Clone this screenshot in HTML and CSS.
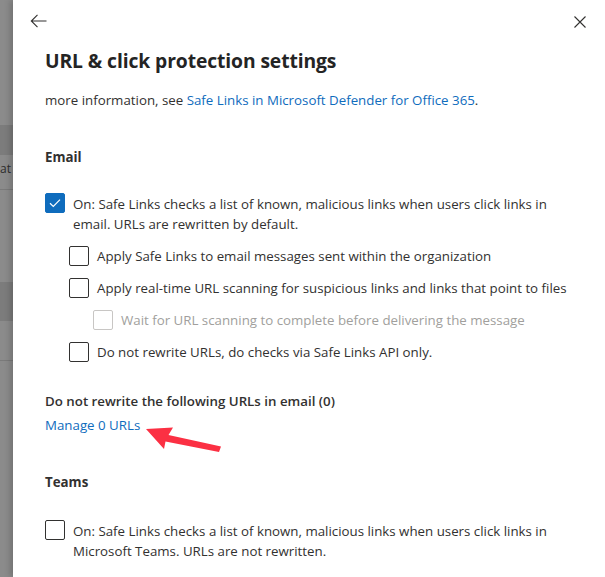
FILE: index.html
```html
<!DOCTYPE html>
<html>
<head>
<meta charset="utf-8">
<link rel="stylesheet" href="styles.css">
</head>
<body>
<div class="page">
  <div class="backdrop">
    <div class="band b1"></div>
    <div class="bd-text">at</div>
    <div class="rule r1"></div>
    <div class="band b2"></div>
    <div class="rule r2"></div>
  </div>
  <div class="panel">
    <div class="topbar">
      <svg class="back" width="17" height="14" viewBox="0 0 17 14"><path d="M7.5 0.8 L1.3 7 L7.5 13.2 M1.3 7 H16.5" fill="none" stroke="#323130" stroke-width="1.1"/></svg>
      <svg class="close" width="12" height="12" viewBox="0 0 12 12"><path d="M0.5 0.5 L11.5 11.5 M11.5 0.5 L0.5 11.5" fill="none" stroke="#323130" stroke-width="1.1"/></svg>
    </div>
    <div class="content">
      <h1 class="title">URL &amp; click protection settings</h1>
      <p class="info">more information, see <a class="link">Safe Links in Microsoft Defender for Office 365</a>.</p>

      <h2 class="section-title email-title">Email</h2>

      <div class="options">
        <label class="opt">
          <span class="box checked"><svg width="12" height="10" viewBox="0 0 12 10"><path d="M1 5.2 L4.3 8.4 L11 1.6" fill="none" stroke="#fff" stroke-width="1.2"/></svg></span>
          <span class="opt-text">On: Safe Links checks a list of known, malicious links when users click links in email. URLs are rewritten by default.</span>
        </label>
        <label class="opt lvl1">
          <span class="box"></span>
          <span class="opt-text">Apply Safe Links to email messages sent within the organization</span>
        </label>
        <label class="opt lvl1">
          <span class="box"></span>
          <span class="opt-text">Apply real-time URL scanning for suspicious links and links that point to files</span>
        </label>
        <label class="opt lvl2 disabled">
          <span class="box"></span>
          <span class="opt-text">Wait for URL scanning to complete before delivering the message</span>
        </label>
        <label class="opt lvl1">
          <span class="box"></span>
          <span class="opt-text">Do not rewrite URLs, do checks via Safe Links API only.</span>
        </label>
      </div>

      <div class="rewrite">
        <div class="rewrite-label">Do not rewrite the following URLs in email (0)</div>
        <a class="link">Manage 0 URLs</a>
      </div>

      <h2 class="section-title teams-title">Teams</h2>

      <div class="options teams-options">
        <label class="opt">
          <span class="box"></span>
          <span class="opt-text">On: Safe Links checks a list of known, malicious links when users click links in Microsoft Teams. URLs are not rewritten.</span>
        </label>
      </div>
    </div>
  </div>
  <svg class="annot" width="605" height="577" viewBox="0 0 605 577">
    <polygon points="146,429 173,427.5 168.5,435 221,446.5 219,452 165.5,441.5 164,449" fill="#fb3043"/>
  </svg>
</div>
</body>
</html>
```

FILE: styles.css
```css
* { box-sizing: border-box; }
html, body { margin: 0; padding: 0; }
body {
  width: 605px;
  height: 577px;
  overflow: hidden;
  background: #fff;
  font-family: "Segoe UI", "Open Sans", "Noto Sans", sans-serif;
  color: #323130;
}
.page {
  position: relative;
  display: flex;
  width: 605px;
  height: 577px;
}
.backdrop {
  width: 13px;
  flex: none;
  background: #8b8b8b;
  display: flex;
  flex-direction: column;
  overflow: hidden;
}
.band { background: #7c7c7c; flex: none; }
.b1 { margin-top: 125px; height: 30px; }
.bd-text {
  font-size: 12px;
  line-height: 14px;
  height: 14px;
  margin-top: 7px;
  color: #2d2d2d;
  margin-left: 0;
  white-space: nowrap;
}
.rule { height: 1px; background: #7a7a7a; flex: none; }
.r1 { margin-top: 13px; }
.b2 { margin-top: 92px; height: 39px; }
.r2 { margin-top: 39px; }

.panel {
  flex: 1;
  background: #fff;
  box-shadow: -3px 0 6px rgba(0,0,0,0.18);
  position: relative;
  display: flex;
  flex-direction: column;
}
.topbar {
  display: flex;
  justify-content: space-between;
  align-items: flex-start;
  padding: 14px 19px 0 17px;
  height: 34px;
}
.close { margin-top: 2px; }

.content {
  padding: 0 30px 0 32px;
  font-size: 13.3px;
  line-height: 20px;
}
.title {
  margin: 13px 0 0;
  font-size: 19.3px;
  line-height: 28px;
  font-weight: 700;
  color: #242424;
  letter-spacing: -0.1px;
}
.info { margin: 15px 0 0; }
.link { color: #0f6cbd; text-decoration: none; cursor: pointer; }

.section-title {
  margin: 0;
  font-size: 13.3px;
  line-height: 20px;
  font-weight: 700;
  color: #323130;
}
.email-title { margin-top: 37px; }

.options {
  display: flex;
  flex-direction: column;
  gap: 12px;
  margin-top: 26px;
}
.opt {
  display: flex;
  align-items: flex-start;
  gap: 8px;
}
.opt.lvl1 { padding-left: 24px; }
.opt.lvl2 { padding-left: 48px; }
.opt .opt-text { padding-top: 1px; }
.opt.lvl1 .opt-text, .opt.lvl2 .opt-text { padding-top: 0; }
.box {
  width: 20px;
  height: 20px;
  flex: none;
  border: 1px solid #323130;
  border-radius: 2px;
  background: #fff;
  display: flex;
  align-items: center;
  justify-content: center;
}
.box.checked { background: #0f6cbd; border-color: #0f6cbd; }
.disabled .box { border-color: #c8c6c4; }
.disabled .opt-text { color: #a19f9d; }

.rewrite { margin-top: 29px; display: flex; flex-direction: column; gap: 4px; }
.rewrite-label { font-weight: 600; color: #323130; }

.teams-title { margin-top: 37px; }
.teams-options { margin-top: 28px; }

.annot {
  position: absolute;
  left: 0;
  top: 0;
  pointer-events: none;
}
```
